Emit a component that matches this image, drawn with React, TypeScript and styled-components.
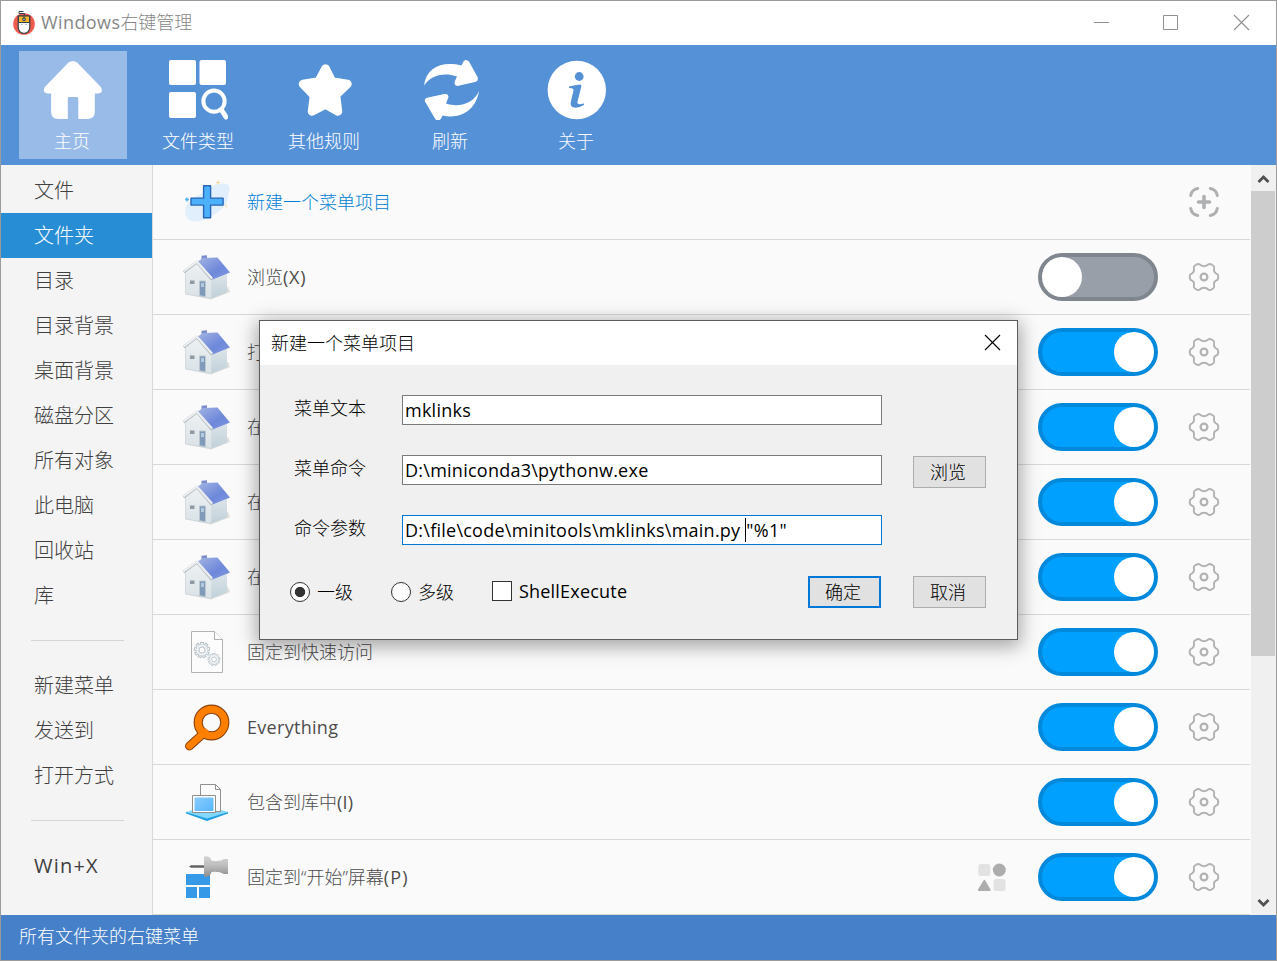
import React from "react";
import styled, { createGlobalStyle, css } from "styled-components";

const Global = createGlobalStyle`
  *, *::before, *::after { box-sizing: border-box; }
  body {
    margin: 0;
    overflow: hidden;
    font-family: "Open Sans", "Noto Sans CJK SC", sans-serif;
    font-size: 18px;
    font-weight: 300;
    color: #505050;
  }
  svg { display: block; flex: none; }
`;

const Window = styled.div`
  position: relative;
  width: 1277px;
  height: 961px;
  display: flex;
  flex-direction: column;
  border: 1px solid #9b9b9b;
  background: #fafafa;
`;

const TitleBar = styled.header`
  height: 44px;
  flex: none;
  display: flex;
  align-items: center;
  padding: 0 26px 0 11px;
  background: #fff;
  color: #868686;
`;

const Title = styled.span`
  flex: 1;
  margin: -2px 0 0 5px;
  line-height: 24px;
`;

const Latin = styled.span<{ $spacing?: number }>`
  font-weight: 400;
  letter-spacing: ${(p) => p.$spacing ?? 0.2}px;
`;

const WindowControls = styled.div`
  display: flex;
  align-items: center;
  gap: 53px;
  margin-top: -1px;
`;

const Toolbar = styled.nav`
  height: 120px;
  flex: none;
  display: flex;
  gap: 18px;
  padding: 6px 18px;
  background: #5591d7;
`;

const ToolButton = styled.button<{ $active?: boolean }>`
  width: 108px;
  height: 108px;
  display: flex;
  flex-direction: column;
  align-items: center;
  padding: 8px 2px 0 0;
  border: 0;
  background: ${(p) => (p.$active ? "#99bbe7" : "transparent")};
  color: #fff;
  font: inherit;
  line-height: 26px;
  white-space: nowrap;
`;

const ToolLabel = styled.span`
  margin-top: 8px;
`;

const Body = styled.div`
  flex: none;
  height: 750px;
  display: flex;
`;

const Sidebar = styled.aside`
  width: 152px;
  flex: none;
  padding-top: 3px;
  border-right: 1px solid #d8d8d8;
  background: #f4f4f4;
`;

const SideItem = styled.div<{ $active?: boolean }>`
  height: 45px;
  padding-left: 33px;
  font-size: 20px;
  line-height: 45px;
  color: ${(p) => (p.$active ? "#fff" : "#404040")};
  background: ${(p) => (p.$active ? "#278dd4" : "transparent")};
`;

const SideSeparator = styled.hr`
  width: 93px;
  height: 1px;
  margin: 22px 0 22px 30px;
  border: 0;
  background: #d5d5d5;
`;

const List = styled.main`
  width: 1097px;
  flex: none;
`;

const Row = styled.div`
  height: 75px;
  display: flex;
  align-items: center;
  padding: 0 30px 1px 28px;
  border-bottom: 1px solid #d8d8d8;
`;

const RowLabel = styled.span<{ $accent?: boolean }>`
  flex: 1;
  margin-left: 14px;
  padding-top: 1px;
  line-height: 28px;
  color: ${(p) => (p.$accent ? "#0080d4" : "#4c4c4c")};
`;

const RowActions = styled.div`
  display: flex;
  align-items: center;
  gap: 30px;
`;

const Toggle = styled.span<{ $on: boolean }>`
  width: 120px;
  height: 48px;
  display: flex;
  align-items: center;
  justify-content: ${(p) => (p.$on ? "flex-end" : "flex-start")};
  border: 4px solid ${(p) => (p.$on ? "#0389dc" : "#7f868e")};
  border-radius: 24px;
  background: ${(p) => (p.$on ? "#00a0ff" : "#989fa9")};
`;

const Knob = styled.span`
  width: 40px;
  height: 40px;
  border-radius: 50%;
  background: #fff;
`;

const ScrollBar = styled.div`
  width: 25px;
  margin-left: 1px;
  display: flex;
  flex-direction: column;
  align-items: center;
  background: #f0f0f0;
`;

const ScrollButton = styled.div`
  height: 26px;
  flex: none;
  display: flex;
  align-items: center;
  justify-content: center;
  padding-top: 2px;
`;

const ScrollTrack = styled.div`
  flex: 1;
  width: 100%;
`;

const ScrollThumb = styled.div`
  width: 24px;
  height: 465px;
  background: #cdcdcd;
`;

const StatusBar = styled.footer`
  flex: 1;
  padding-left: 18px;
  line-height: 43px;
  color: #fff;
  background: #4580c8;
`;

const Dialog = styled.section`
  position: absolute;
  left: 258px;
  top: 319px;
  width: 759px;
  height: 320px;
  border: 1px solid #5c5c5c;
  background: #f0f0f0;
  color: #000;
  box-shadow: 0 4px 18px 2px rgba(0, 0, 0, 0.36);
`;

const DialogHeader = styled.div`
  height: 44px;
  display: flex;
  align-items: center;
  justify-content: space-between;
  padding: 0 16px 2px 11px;
  background: #fff;
`;

const Form = styled.div`
  display: flex;
  flex-direction: column;
  padding: 30px 31px 0 34px;
`;

const Field = styled.div`
  height: 60px;
  display: flex;
  align-items: flex-start;
`;

const FieldLabel = styled.label`
  width: 108px;
  line-height: 26px;
`;

const TextBox = styled.div<{ $focused?: boolean }>`
  width: 480px;
  height: 30px;
  display: flex;
  align-items: center;
  padding: 0 2px 1px;
  border: 1px solid ${(p) => (p.$focused ? "#0078d7" : "#7a7a7a")};
  background: #fff;
  font-weight: 400;
  letter-spacing: 0.25px;
  white-space: pre;
`;

const Caret = styled.span`
  width: 1px;
  height: 24px;
  background: #000;
`;

const PushButton = styled.button<{ $primary?: boolean }>`
  width: 73px;
  height: 32px;
  flex: none;
  padding: 0 3px 0 0;
  font: inherit;
  line-height: 26px;
  color: #000;
  background: #e1e1e1;
  ${(p) =>
    p.$primary
      ? css`
          border: 2px solid #0078d7;
        `
      : css`
          border: 1px solid #adadad;
        `}
`;

const BrowseButton = styled(PushButton)`
  margin: 1px 0 0 31px;
`;

const OptionRow = styled.div`
  display: flex;
  align-items: center;
  margin: 1px 0 0 -4px;
`;

const Option = styled.label<{ $width: number }>`
  width: ${(p) => p.$width}px;
  display: flex;
  align-items: center;
  gap: 7px;
  line-height: 26px;
`;

const Radio = styled.span<{ $checked?: boolean }>`
  width: 20px;
  height: 20px;
  border: 1px solid #333;
  border-radius: 50%;
  background: ${(p) =>
    p.$checked ? "radial-gradient(circle, #333 0 4.8px, #fff 5.4px)" : "#fff"};
`;

const CheckBox = styled.span`
  width: 20px;
  height: 20px;
  margin-top: -2px;
  border: 1px solid #333;
  background: #fff;
`;

const OptionText = styled(Latin)`
  margin-top: -3px;
`;

const OptionButtons = styled.div`
  display: flex;
  gap: 32px;
`;

const CrossIcon = ({ color }: { color: string }) => (
  <svg width="17" height="17" viewBox="0 0 17 17" stroke={color} strokeWidth="1.1">
    <path d="M1 1 16 16M16 1 1 16" />
  </svg>
);

const AppLogo = () => (
  <svg width="24" height="26" viewBox="0 0 24 26">
    <circle cx="12" cy="14" r="10.8" fill="#f15b4e" />
    <path d="M6.200 6h11.600V17.500a5.800 5.800 0 0 1-11.600 0Z" fill="#fff" stroke="#34404a" strokeWidth="1.200" />
    <path d="M6.500 6h11V12.500h-11Z" fill="#f6b32c" stroke="#34404a" strokeWidth="1" />
    <path d="M12 6v2" stroke="#34404a" />
    <circle cx="12" cy="9.300" r="1.500" fill="#8fa6ae" stroke="#34404a" strokeWidth="1" />
    <path d="M12.500 5V3.500H7V1.500h4.500" fill="none" stroke="#34404a" strokeWidth="1" />
    <path d="M9 14.500h2M13 14.500h2" stroke="#b9c0c5" />
  </svg>
);

const HomeIcon = () => (
  <svg width="60" height="61" viewBox="-.8 0 60 61" fill="#fff">
    <path d="M25.700 3.500Q30 .4 34.300 3.500L57.800 27.800Q61.300 33.400 55.700 34.400H52V53Q52 60 44.500 60H35.500V40Q35.500 38 34 38H26.500Q25 38 25 40V60H15.500Q8.300 60 8.300 53V34.400H4.500Q-1.200 33.400 2.200 27.800Z" />
  </svg>
);

const FileTypeIcon = () => (
  <svg width="60" height="61" viewBox="0 0 60 61" fill="#fff">
    <rect x="1" y="1" width="27" height="25" rx="2" />
    <rect x="31.500" y="1" width="26.500" height="25" rx="2" />
    <rect x="1" y="33" width="27" height="26" rx="2" />
    <circle cx="46" cy="42.200" r="10.600" fill="none" stroke="#fff" strokeWidth="4" />
    <path d="m53.500 51 4.500 7" stroke="#fff" strokeWidth="5" strokeLinecap="round" />
  </svg>
);

const StarIcon = () => (
  <svg width="60" height="61" viewBox="0 0 60 61" fill="#fff">
    <path
      d="M31 10 37.500 23 53 25.500 41.500 36.500 43.500 53 31 46 17.500 53 19.500 37 8.500 25.500 24 23Z"
      transform="translate(.5 -.5)"
      stroke="#fff"
      strokeWidth="8.500"
      strokeLinejoin="round"
    />
  </svg>
);

const RefreshIcon = () => (
  <svg width="60" height="61" viewBox="0 0 60 61" fill="#fff">
    <path d="M4 26.500C6.500 8 22 2 41.500 6.500L43.500 2.200Q46-.5 49 2.500L57.500 18Q59 22 55 23L38.500 26.800Q34 27.500 34.500 23L37 17.500C23 12.500 10 17 4 26.500Z" />
    <path d="M59 32C56 51 41 60.500 22.500 56.500L20.800 60Q18 63 15.200 60L5 42.500Q4 39.500 8 38.500L24.500 35Q28.300 34.500 28.500 38L26 44.500C40 49 54 44 59 32Z" />
  </svg>
);

const AboutIcon = () => (
  <svg width="60" height="61" viewBox="0 0 60 61">
    <circle cx="30.800" cy="31" r="29.200" fill="#fff" />
    <circle cx="33.200" cy="17.500" r="4.400" fill="#5591d7" />
    <path
      d="M23 27.500Q29 26 34.500 25.500Q35.700 26 35.300 27.500L31.300 43.500Q31.500 46.200 36.500 44.800L38 44.500V46Q33 49 28.500 48.600Q23.500 48 25 42L27.500 31.500Q28 28.700 23 29Z"
      fill="#5591d7"
    />
  </svg>
);

const PlusIcon = () => (
  <svg width="52" height="48" viewBox="0 0 52 48">
    <path d="M5 38C2 28 8 22 18 17S30 6 42 5.500Q52 5 47 18C47 27 41 31 34 36S10 49 5 38Z" fill="#e0effb" />
    <path d="M37 2.500v4M35 4.500h4M45 26.500v3" stroke="#f7d795" />
    <path d="M6 19.500v4M4 21.500h4" stroke="#52b5ee" strokeWidth="1.600" />
    <path d="M22.600 7h7v12.400h12.500v7H29.600V39h-7V26.400H10v-7h12.600Z" transform="translate(0 .7)" fill="#4cb1fa" stroke="#2865b8" strokeWidth="1.400" strokeLinejoin="round" />
  </svg>
);

const HouseIcon = () => (
  <svg width="52" height="48" viewBox="0 0 52 48">
    <defs>
      <linearGradient id="roof" x1="0" y1="0" x2="1" y2="1">
        <stop offset="0" stopColor="#a3b4e3" />
        <stop offset=".6" stopColor="#6e88da" />
        <stop offset="1" stopColor="#8199e2" />
      </linearGradient>
      <linearGradient id="wall" x1="0" y1="0" x2="0" y2="1">
        <stop offset="0" stopColor="#eef1f2" />
        <stop offset="1" stopColor="#d9e2e7" />
      </linearGradient>
      <linearGradient id="side" x1="0" y1="0" x2="0" y2="1">
        <stop offset="0" stopColor="#dde5e9" />
        <stop offset="1" stopColor="#c0d0d9" />
      </linearGradient>
    </defs>
    <path d="M4 41 30 46.500 49 39 47 34 28 40Z" fill="#c9cbc4" opacity=".6" />
    <path d="m20.500 2.700 5.500-.5V8h-5.500Z" fill="#7a8ccb" />
    <path d="M4.500 19 16 9 31 25V45.500L4.500 41Z" fill="url(#wall)" stroke="#c9d1d5" strokeWidth=".7" />
    <path d="M30.500 25 46 20V39.500L30.500 45.500Z" fill="url(#side)" />
    <path d="M16 9 22 5 36.500 4.500 49 19.500 31.500 26.500Z" fill="url(#roof)" />
    <path d="M2.500 19 16 9.200 31 26.500" fill="none" stroke="#b3babf" strokeWidth="2.800" strokeLinejoin="round" />
    <path d="M2.500 18.300 16 8.700 31 25.500" fill="none" stroke="#eceff1" strokeWidth="2.200" strokeLinejoin="round" />
    <path d="M8.500 27h5.500v4.500H8.500Z" fill="#8f9ba4" stroke="#e3e7e9" strokeWidth="1" />
    <path d="M18.500 28H24.500V43.700l-6-1Z" fill="#7f9bb9" stroke="#bcc8d1" />
    <path d="M20 30h3v4h-3Z" fill="#b4cadc" />
  </svg>
);

const teeth = Array.from({ length: 9 }, (_, i) => i * 40);

const Cog = ({ x, y, s }: { x: number; y: number; s: number }) => (
  <g transform={`translate(${x} ${y}) scale(${s})`} fill="#f8fafb" stroke="#b3bec5">
    {teeth.map((a) => (
      <rect key={a} x="-1.500" y="-8" width="3" height="4" transform={`rotate(${a})`} />
    ))}
    <circle r="6" />
    <circle r="6" stroke="none" fill="#eef1f3" />
    <circle r="3.200" fill="#fcfcfc" />
  </g>
);

const SettingsFileIcon = () => (
  <svg width="52" height="48" viewBox="0 0 52 48">
    <path d="M10.500 3.500h23l8 8v33h-31Z" fill="#fcfcfc" stroke="#b2b2b2" />
    <path d="M33.500 3.500v8h8" fill="#fff" stroke="#b2b2b2" />
    <Cog x={21} y={22} s={0.95} />
    <Cog x={33} y={31.5} s={0.75} />
  </svg>
);

const SearchIcon = () => (
  <svg width="52" height="48" viewBox="0 0 52 48" fill="none">
    <path d="M23 30 8.500 43" stroke="#8c4310" strokeWidth="9" strokeLinecap="round" />
    <circle cx="30.500" cy="19.500" r="13.300" stroke="#8c4310" strokeWidth="9.200" />
    <path d="M24 29 8.500 43" stroke="#ff8000" strokeWidth="6.800" strokeLinecap="round" />
    <circle cx="30.500" cy="19.500" r="13.300" stroke="#ff8000" strokeWidth="7" />
  </svg>
);

const LibraryIcon = () => (
  <svg width="52" height="48" viewBox="0 0 52 48">
    <defs>
      <linearGradient id="screen" x1="0" y1="0" x2="1" y2="1">
        <stop offset="0" stopColor="#8cccff" />
        <stop offset="1" stopColor="#55b6fb" />
      </linearGradient>
    </defs>
    <path d="m5 34 21-6 21 6-21 7Z" fill="#84d8fb" />
    <path d="M5 34v1.500L26 43l21-7.500V34l-21 6.500Z" fill="#1d9fe2" />
    <path d="M19.500 6.500h15l5 5v22h-20Z" fill="#fafafa" stroke="#909090" />
    <path d="M34.500 6.500v5h5" fill="none" stroke="#909090" />
    <path d="M11.500 17.500h23v17h-23Z" fill="#fff" stroke="#8f8f8f" />
    <path d="M13.500 19.500h19v13.500h-19Z" fill="url(#screen)" />
  </svg>
);

const PinIcon = () => (
  <svg width="52" height="48" viewBox="0 0 52 48">
    <defs>
      <linearGradient id="pin" x1="0" y1="0" x2="0" y2="1">
        <stop offset="0" stopColor="#d5d5d5" />
        <stop offset=".45" stopColor="#bdbdbd" />
        <stop offset="1" stopColor="#8e8e8e" />
      </linearGradient>
    </defs>
    <path d="M5 21h24v11H5ZM5 34h11v11H5ZM18 34h11v11H18Z" fill="#3699e8" />
    <path d="m8 13.500 2-1.300h14v2.600H10Z" fill="#646464" />
    <path d="M23 3.500Q29 2 30.500 7.500Q39 9 43 6H47V21H43Q38 18 30.500 19Q29 25 23 23.500Z" fill="url(#pin)" />
  </svg>
);

const FocusPlusIcon = () => (
  <svg width="32" height="32" viewBox="0 0 32 32" fill="none" stroke="#aeb0b1" strokeWidth="3" strokeLinecap="round">
    <path d="M2.700 9.500q1-6 7-7M22.300 2.500q6 1 7 7M29.300 22.500q-1 6-7 7M9.700 29.500q-6-1-7-7" />
    <path d="M16 10.500v11M10.500 16h11" strokeWidth="3.600" />
  </svg>
);

const GearIcon = () => (
  <svg width="32" height="32" viewBox="0 0 32 32" fill="none" stroke="#b2b2b2" strokeWidth="1.900" strokeLinejoin="round">
    <path d="M8.200 3.800Q9.700 2.600 11 3.100Q13.500 5.200 16 5.200T21 3.100Q22.300 2.600 23.800 3.800L25.500 4.800Q26.600 6 26 8.200Q25.700 11.500 28 12.300Q30.300 13 30.300 16T28 19.700Q25.700 20.500 26 23.800Q26.600 26 25.500 27.200L23.800 28.200Q22.300 29.400 21 28.900Q18.500 26.800 16 26.800T11 28.900Q9.700 29.400 8.200 28.200L6.500 27.200Q5.400 26 6 23.800Q6.300 20.500 4 19.700Q1.700 19 1.700 16T4 12.300Q6.300 11.500 6 8.200Q5.400 6 6.500 4.800Z" />
    <circle cx="16" cy="16" r="3.400" strokeWidth="2.200" />
  </svg>
);

const ShapesIcon = () => (
  <svg width="32" height="32" viewBox="0 0 32 32">
    <rect x="2.300" y="3" width="12" height="12" rx="2.500" fill="#e2e2e2" />
    <circle cx="23.300" cy="9" r="6.500" fill="#adadad" />
    <path d="M8.500 18.700Q9 18.700 9.500 19.700L14.500 28.500Q15 30 13.500 30H3Q1.500 30 2 28.500L7.300 19.700Q8 18.700 8.500 18.700Z" fill="#adadad" />
    <rect x="17.500" y="18" width="12" height="12" rx="2.500" fill="#e2e2e2" />
  </svg>
);

const Chevron = ({ down }: { down?: boolean }) => (
  <svg width="13" height="12" viewBox="0 0 13 12" fill="none" stroke="#505050" strokeWidth="2.800">
    <path d={down ? "M1.500 3 6.500 8l5-5" : "M1.500 9 6.500 4l5 5"} />
  </svg>
);

/* Latin runs are set one weight heavier than the Chinese text around them. */
const MixedText = ({ text, spacing }: { text: string; spacing?: number }) => (
  <>
    {text.split(/([A-Za-z()+]+)/).map((part, i) =>
      i % 2 ? (
        <Latin key={i} $spacing={spacing}>
          {part}
        </Latin>
      ) : (
        part
      ),
    )}
  </>
);

const tools = [
  { label: "主页", icon: <HomeIcon />, active: true },
  { label: "文件类型", icon: <FileTypeIcon /> },
  { label: "其他规则", icon: <StarIcon /> },
  { label: "刷新", icon: <RefreshIcon /> },
  { label: "关于", icon: <AboutIcon /> },
];

const sideGroups = [
  ["文件", "文件夹", "目录", "目录背景", "桌面背景", "磁盘分区", "所有对象", "此电脑", "回收站", "库"],
  ["新建菜单", "发送到", "打开方式"],
  ["Win+X"],
];

const rows = [
  { label: "浏览(X)", icon: <HouseIcon />, on: false, spacing: 0.8 },
  { label: "打", icon: <HouseIcon />, on: true },
  { label: "在", icon: <HouseIcon />, on: true },
  { label: "在", icon: <HouseIcon />, on: true },
  { label: "在", icon: <HouseIcon />, on: true },
  { label: "固定到快速访问", icon: <SettingsFileIcon />, on: true },
  { label: "Everything", icon: <SearchIcon />, on: true, spacing: 0.3 },
  { label: "包含到库中(I)", icon: <LibraryIcon />, on: true },
  { label: "固定到“开始”屏幕(P)", icon: <PinIcon />, on: true, shapes: true, spacing: 1.2 },
];

export default function App() {
  return (
    <>
      <Global />
      <Window>
        <TitleBar>
          <AppLogo />
          <Title>
            <Latin $spacing={0.4}>Windows</Latin>右键管理
          </Title>
          <WindowControls>
            <svg width="17" height="17" viewBox="0 0 17 17" stroke="#909090">
              <path d="M1 8.500h15" />
            </svg>
            <svg width="17" height="17" viewBox="0 0 17 17" stroke="#909090" fill="none">
              <path d="M.5 1.500h14v14h-14Z" />
            </svg>
            <CrossIcon color="#909090" />
          </WindowControls>
        </TitleBar>
        <Toolbar>
          {tools.map((t) => (
            <ToolButton key={t.label} $active={t.active}>
              {t.icon}
              <ToolLabel>{t.label}</ToolLabel>
            </ToolButton>
          ))}
        </Toolbar>
        <Body>
          <Sidebar>
            {sideGroups.map((group, i) => (
              <React.Fragment key={i}>
                {i > 0 && <SideSeparator />}
                {group.map((item) => (
                  <SideItem key={item} $active={item === "文件夹"}>
                    <MixedText text={item} spacing={1.2} />
                  </SideItem>
                ))}
              </React.Fragment>
            ))}
          </Sidebar>
          <List>
            <Row>
              <PlusIcon />
              <RowLabel $accent>新建一个菜单项目</RowLabel>
              <FocusPlusIcon />
            </Row>
            {rows.map((r, i) => (
              <Row key={i}>
                {r.icon}
                <RowLabel>
                  <MixedText text={r.label} spacing={r.spacing} />
                </RowLabel>
                <RowActions>
                  {r.shapes && <ShapesIcon />}
                  <Toggle $on={r.on}>
                    <Knob />
                  </Toggle>
                  <GearIcon />
                </RowActions>
              </Row>
            ))}
          </List>
          <ScrollBar>
            <ScrollButton>
              <Chevron />
            </ScrollButton>
            <ScrollTrack>
              <ScrollThumb />
            </ScrollTrack>
            <ScrollButton>
              <Chevron down />
            </ScrollButton>
          </ScrollBar>
        </Body>
        <StatusBar>所有文件夹的右键菜单</StatusBar>

        <Dialog>
          <DialogHeader>
            新建一个菜单项目
            <CrossIcon color="#000" />
          </DialogHeader>
          <Form>
            <Field>
              <FieldLabel>菜单文本</FieldLabel>
              <TextBox>mklinks</TextBox>
            </Field>
            <Field>
              <FieldLabel>菜单命令</FieldLabel>
              <TextBox>D:\miniconda3\pythonw.exe</TextBox>
              <BrowseButton>浏览</BrowseButton>
            </Field>
            <Field>
              <FieldLabel>命令参数</FieldLabel>
              <TextBox $focused>
                {"D:\\file\\code\\minitools\\mklinks\\main.py "}
                <Caret />
                {'"%1"'}
              </TextBox>
            </Field>
            <OptionRow>
              <Option $width={101}>
                <Radio $checked />
                一级
              </Option>
              <Option $width={101}>
                <Radio />
                多级
              </Option>
              <Option $width={316}>
                <CheckBox />
                <OptionText>ShellExecute</OptionText>
              </Option>
              <OptionButtons>
                <PushButton $primary>确定</PushButton>
                <PushButton>取消</PushButton>
              </OptionButtons>
            </OptionRow>
          </Form>
        </Dialog>
      </Window>
    </>
  );
}
